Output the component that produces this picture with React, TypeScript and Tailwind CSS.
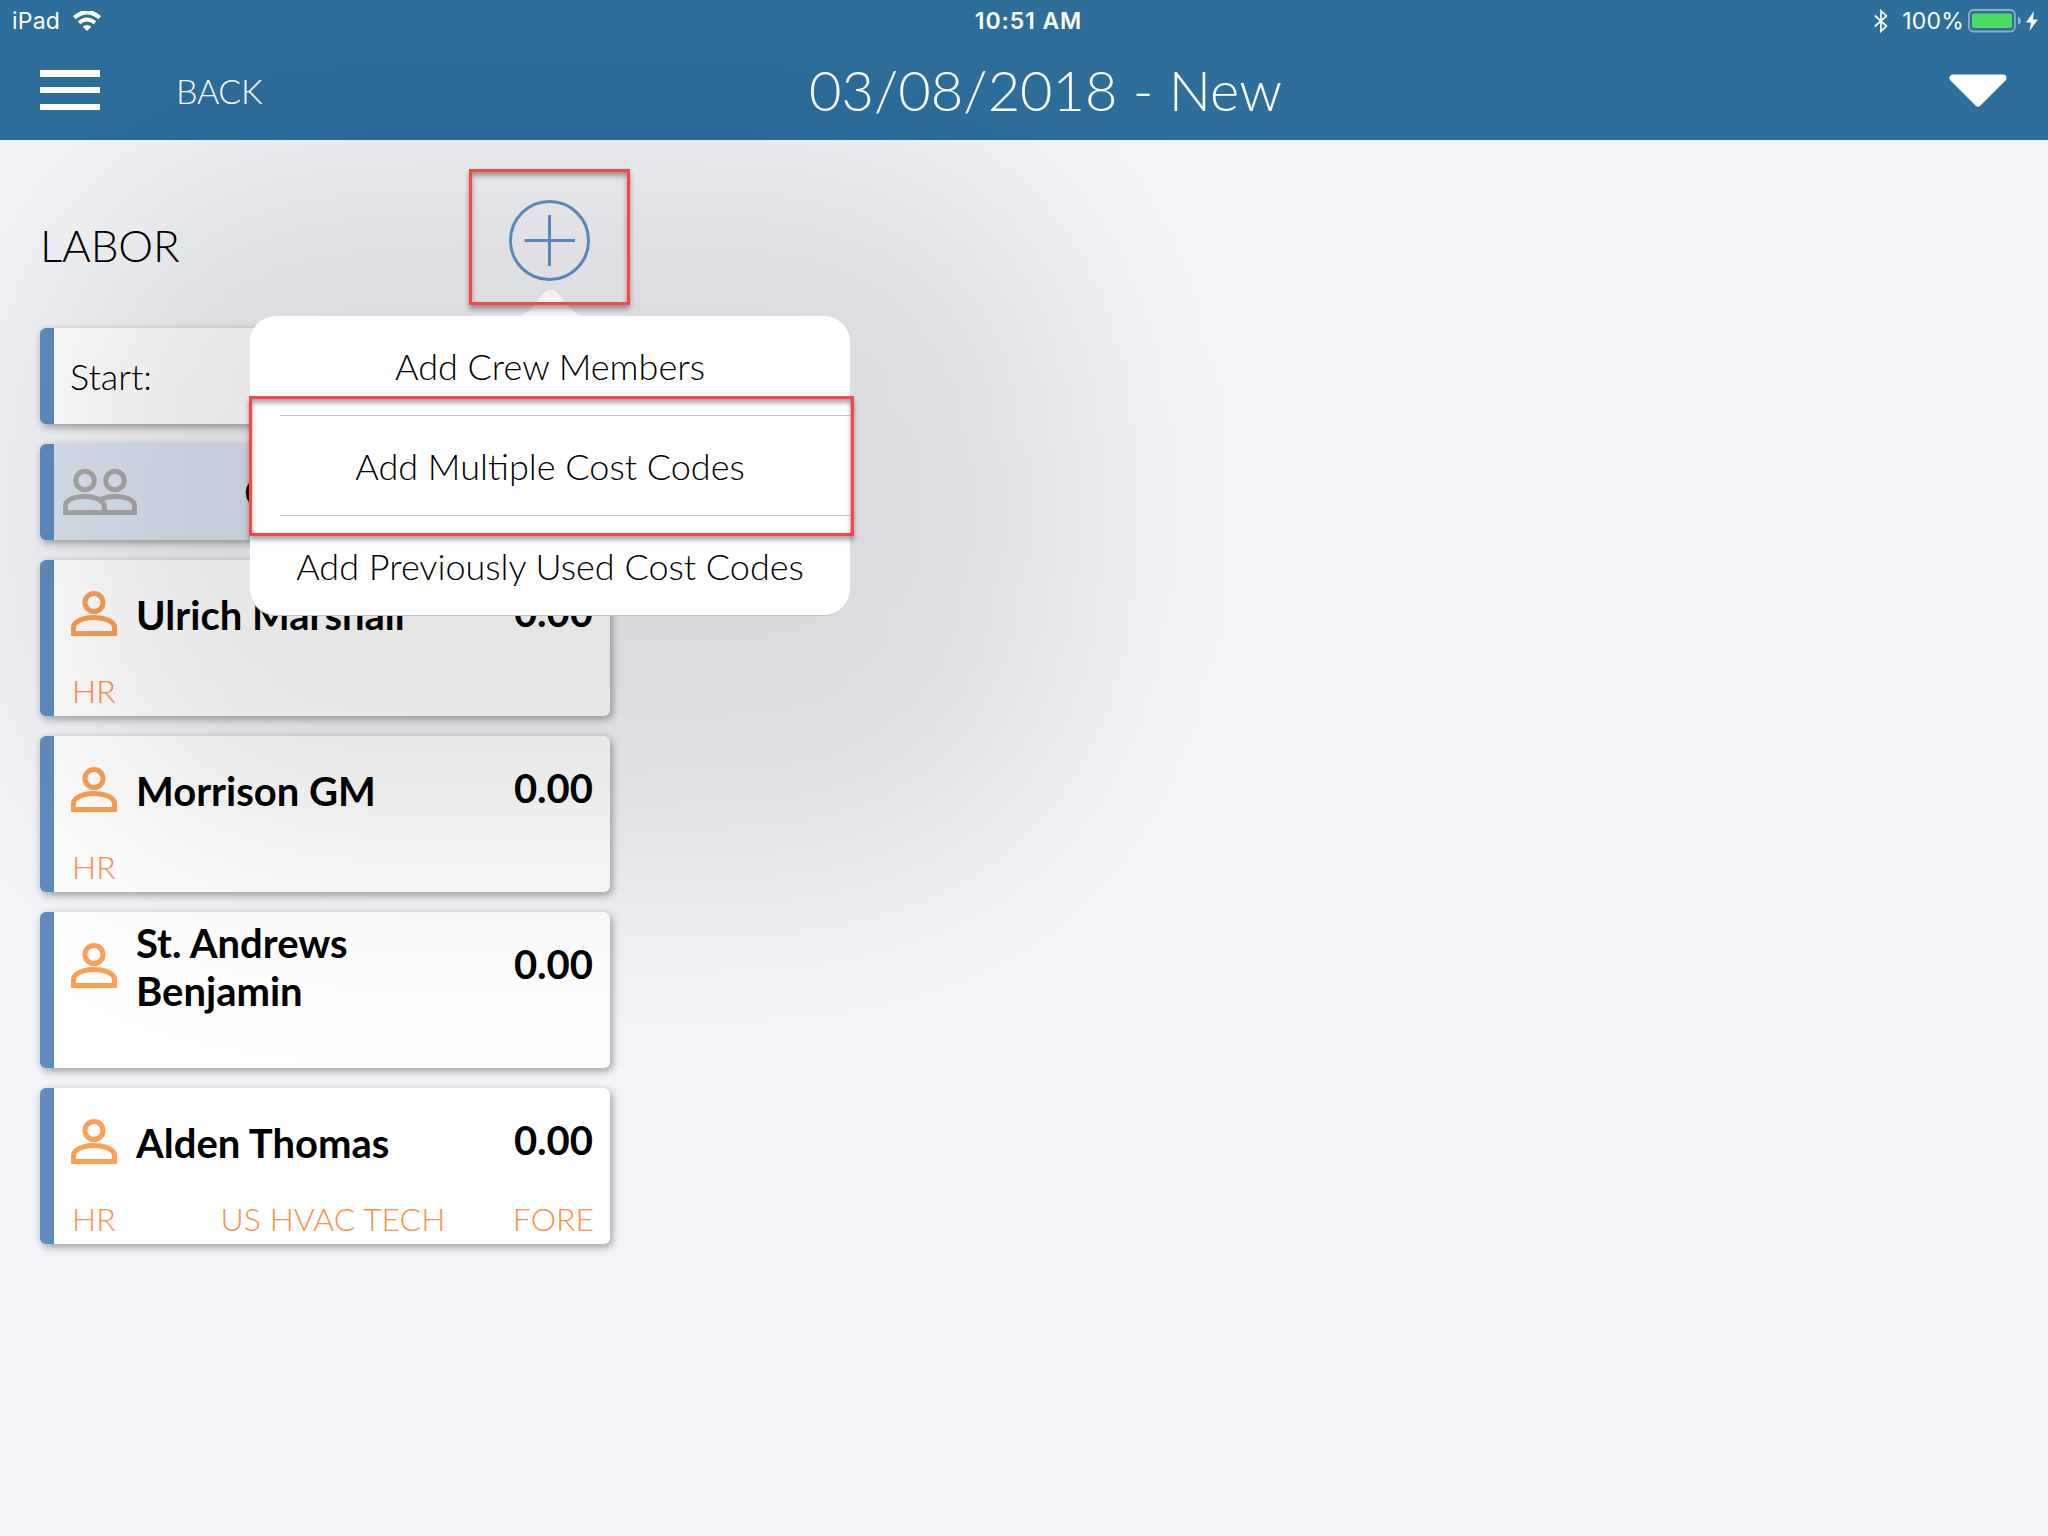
import React from "react";

const people = [
  { name: "Ulrich Marshall", tags: ["HR"], hours: "0.00" },
  { name: "Morrison GM", tags: ["HR"], hours: "0.00" },
  { name: "St. Andrews Benjamin", tags: [], hours: "0.00" },
  { name: "Alden Thomas", tags: ["HR", "US HVAC TECH", "FORE"], hours: "0.00" },
];

const tagAlign = ["text-left", "text-center", "text-right"];

const cardShadow = "shadow-[2px_3px_8px_rgba(0,0,0,0.36)]";

function PersonIcon() {
  return (
    <svg className="block h-[48px] w-[46px]" viewBox="0 0 46 48" fill="none" stroke="#fd9f55" strokeWidth="5">
      <circle cx="23" cy="12.500" r="9" />
      <path d="M2.500 43.500V37.500C2.500 31.500 12 27.500 23 27.500S43.500 31.500 43.500 37.500V43.500Z" />
    </svg>
  );
}

function CrewIcon() {
  return (
    <svg className="block h-[48px] w-[74px]" viewBox="0 0 74 48" fill="none" stroke="#a9a9a9" strokeWidth="4.900">
      <circle cx="22" cy="12.500" r="9.300" />
      <circle cx="52" cy="12.500" r="9.300" />
      <path d="M2.500 44.500V38C2.500 32 11 28.500 22 28.500S41.500 33 41.500 39V44.500Z" />
      <path d="M37 32C41 29.500 46 28.500 52 28.500C63 28.500 71.500 32 71.500 38V44.500H41" />
    </svg>
  );
}

function Header() {
  return (
    <header className="flex h-[140px] flex-col bg-[#2d6e9b] text-white">
      <div className="grid h-[41px] grid-cols-3 items-center font-['Inter',sans-serif] text-[23px] leading-none">
        <div className="flex items-center pl-[12px]">
          <span className="pt-[2px] tracking-[0.200px]">iPad</span>
          <svg className="ml-[13px] h-[20px] w-[28px]" viewBox="0 0 28 20" fill="none" stroke="#fff">
            <path d="M1.300 6.700Q14 -4.300 26.700 6.700" strokeWidth="4.200" />
            <path d="M6 11.800Q14 5.200 22 11.800" strokeWidth="3.800" />
            <path d="M9.700 15.700Q14 12.200 18.300 15.700L14 20Z" fill="#fff" stroke="none" />
          </svg>
        </div>
        <div className="pl-[9px] pt-[2px] text-center font-semibold tracking-[0.900px]">10:51 AM</div>
        <div className="flex items-center justify-end pr-[10px]">
          <svg className="h-[24px] w-[14px]" viewBox="0 0 14 24" fill="none" stroke="#fff" strokeWidth="1.700">
            <path d="M0.800 6.500L12.500 17L7 22.200V1.800L12.500 7L0.800 17.500" />
          </svg>
          <span className="ml-[14px] pt-[2px] tracking-[0.200px]">100%</span>
          <svg className="ml-[4px] h-[24px] w-[53px]" viewBox="0 0 53 24">
            <rect x="0.900" y="1" width="46" height="21.500" rx="4.500" fill="none" stroke="#fff" strokeOpacity="0.450" strokeWidth="1.800" />
            <rect x="4" y="4.500" width="40" height="14.500" rx="1.500" fill="#4cd964" />
            <path d="M50 7.500Q53 9 53 11.700T50 16Z" fill="#fff" fillOpacity="0.500" />
          </svg>
          <svg className="ml-[5px] h-[20px] w-[12px]" viewBox="0 0 12 20" fill="#fff">
            <path d="M8 0L0 11.500H5L3.500 20L12 8.500H7Z" />
          </svg>
        </div>
      </div>
      <div className="grid h-[98px] grid-cols-[1fr_auto_1fr] items-center font-light">
        <div className="flex items-center pl-[40px]">
          <div className="flex h-[40px] w-[60px] flex-col justify-between">
            <div className="h-[6.500px] bg-white" />
            <div className="h-[6.500px] bg-white" />
            <div className="h-[6.500px] bg-white" />
          </div>
          <span className="ml-[76px] pt-[2px] text-[34px] leading-none tracking-[-0.300px]">BACK</span>
        </div>
        <h1 className="ml-[43px] text-[56px] font-light leading-none">03/08/2018 - New</h1>
        <div className="flex justify-end pr-[42px]">
          <svg className="h-[33px] w-[58px] translate-x-px" viewBox="0 0 58 33">
            <path d="M4 4H54L29 29Z" fill="#fff" stroke="#fff" strokeWidth="7" strokeLinejoin="round" />
          </svg>
        </div>
      </div>
    </header>
  );
}

function AddMenu() {
  return (
    <div className="absolute left-[250px] top-[316px] z-20 h-[300px] w-[600px] rounded-[26px] border-b border-[#c4c4c8] bg-white text-center text-[36px] font-light text-black">
      <svg className="absolute -top-[26px] left-[265px] h-[26px] w-[72px]" viewBox="0 0 72 26">
        <path d="M0 26C20 26 24 0 36 0S52 26 72 26Z" fill="#f3f3f3" />
      </svg>
      <div className="flex h-[99px] items-center justify-center">Add Crew Members</div>
      <div className="ml-[30px] h-px bg-[#c6c6c9]" />
      <div className="flex h-[99px] items-center justify-center">Add Multiple Cost Codes</div>
      <div className="ml-[30px] h-px bg-[#c6c6c9]" />
      <div className="flex h-[99px] items-center justify-center">Add Previously Used Cost Codes</div>
    </div>
  );
}

export default function App() {
  return (
    <div className="relative h-[1536px] w-[2048px] overflow-hidden bg-[#f3f4f8] font-['Lato',sans-serif] text-black">
      <Header />
      <main className="w-[650px] pl-[40px]">
        <div className="flex h-[188px] w-[570px] items-start justify-between">
          <h2 className="pt-[83px] text-[44px] font-light leading-none tracking-[-0.200px]">LABOR</h2>
          <svg className="mt-[59px] h-[82px] w-[82px] -translate-x-[19px]" viewBox="0 0 82 82" fill="none" stroke="#6192c6" strokeWidth="3">
            <circle cx="40.500" cy="41.500" r="39" />
            <path d="M40.500 16V67M15.500 41.500H66" />
          </svg>
        </div>
        <div className="flex w-[570px] flex-col gap-[20px]">
          <div className={`flex h-[96px] items-center rounded-[6px] border-l-[14px] border-[#5f8dbf] bg-white pl-[16px] text-[36px] font-light ${cardShadow}`}>
            <span>Start:</span>
          </div>
          <div className={`flex h-[96px] items-center rounded-[6px] border-l-[14px] border-[#5f8dbf] bg-[#dae3f0] pl-[9px] text-[40px] ${cardShadow}`}>
            <CrewIcon />
            <span className="ml-[107px]">Crew</span>
          </div>
          {people.map((p) => (
            <div key={p.name} className={`flex h-[156px] flex-col rounded-[6px] border-l-[14px] border-[#5f8dbf] bg-white pl-[17px] pr-[17px] ${cardShadow}`}>
              <div className="flex h-[110px] items-center text-[40px] font-bold leading-[48px]">
                <div className="mr-[19px] mt-[-3px]"><PersonIcon /></div>
                <div className="w-[300px]">{p.name}</div>
                <div className="ml-auto pb-[6px]">{p.hours}</div>
              </div>
              <div className="-mr-[1px] grid grid-cols-[1fr_auto_1fr] pl-[1px] pt-[1px] text-[32px] font-light leading-[40px] text-[#fb8f45]">
                {p.tags.map((t, i) => <span key={t} className={tagAlign[i]}>{t}</span>)}
              </div>
            </div>
          ))}
        </div>
      </main>
      <div className="pointer-events-none absolute left-[60px] top-[165px] z-10 h-[690px] w-[995px] rounded-[230px] bg-black/[0.102] blur-[110px]" />
      <AddMenu />
      <div className="absolute left-[469px] top-[169px] z-30 h-[136px] w-[161px] border-[3px] border-[#ff4242] shadow-[0_4px_5px_rgba(0,0,0,0.35),inset_0_4px_5px_rgba(0,0,0,0.35)]" />
      <div className="absolute left-[249px] top-[396px] z-30 h-[140px] w-[605px] border-[3px] border-[#ff4242] shadow-[0_4px_5px_rgba(0,0,0,0.35),inset_0_4px_5px_rgba(0,0,0,0.35)]" />
    </div>
  );
}
